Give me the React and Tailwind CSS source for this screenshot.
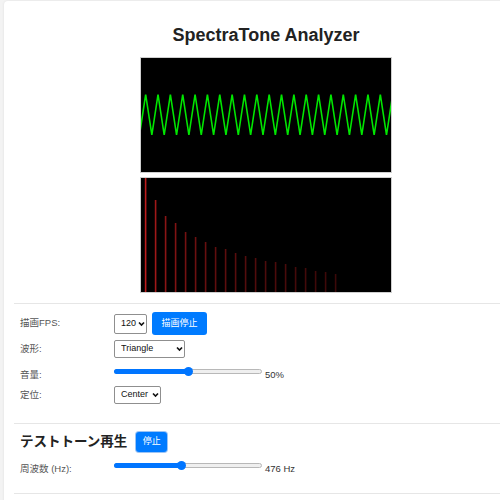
import { useState } from "react";

// triangle wave as drawn on the scope canvas
const wavePoints = (() => {
  const pts = [];
  const period = 12.35;
  for (let k = -1; k < 22; k++) {
    const t = -1.5 + k * period;
    pts.push(`${t.toFixed(2)},77`);
    pts.push(`${(t + period / 2).toFixed(2)},36.5`);
  }
  return pts.join(" ");
})();

const spectrum = [114, 92, 76, 69, 60, 55, 50, 45, 43, 39, 36, 34, 31, 30, 28, 25, 24, 21, 20, 18];

function Chevron() {
  return (
    <svg
      className="pointer-events-none absolute right-[2.5px] top-1/2 -translate-y-1/2"
      width="7"
      height="5"
      viewBox="0 0 7 5"
    >
      <path d="M1 1 L3.5 3.6 L6 1" fill="none" stroke="#111" strokeWidth="1.6" />
    </svg>
  );
}

function Select({ value, options, width, height = "h-[18px]" }) {
  return (
    <div className={`relative ${width} ${height}`}>
      <select
        defaultValue={value}
        className={`w-full ${height} appearance-none rounded-[2px] border border-[#8f8f8f] bg-white pl-[6px] text-[9px] text-[#111]`}
      >
        {options.map((o) => (
          <option key={o}>{o}</option>
        ))}
      </select>
      <Chevron />
    </div>
  );
}

function Slider({ ratio }) {
  return (
    <div className="relative h-[9px] w-[148px]">
      <div className="absolute left-0 right-0 top-[2px] h-[5px] rounded-full border border-[#b8b8b8] bg-[#efefef]" />
      <div
        className="absolute left-0 top-[2px] h-[5px] rounded-full bg-[#0075ff]"
        style={{ width: `${4 + ratio * 140}px` }}
      />
      <div
        className="absolute top-0 h-[9px] w-[9px] rounded-full bg-[#0075ff]"
        style={{ left: `${ratio * 139}px` }}
      />
    </div>
  );
}

export default function App() {
  const [playing] = useState(true);

  return (
    <div className="h-[500px] w-[500px] overflow-hidden bg-[#f3f3f3] font-['Liberation_Sans','Noto_Sans_CJK_JP',sans-serif]">
      <div className="ml-[4px] mt-[1px] w-[524px] rounded-[4px] bg-white px-[10px] pt-[24px] pb-[20px] shadow-[0_0_3px_rgba(0,0,0,0.08)]">
        <h1 className="text-center text-[18px] font-bold leading-[21px] text-[#222]">
          SpectraTone Analyzer
        </h1>

        <div className="mx-auto mt-[11px] h-[116px] w-[252px] border border-[#cfcfcf] bg-black">
          <svg width="250" height="114" viewBox="0 0 250 114">
            <polyline points={wavePoints} fill="none" stroke="#00e600" strokeWidth="1.6" />
          </svg>
        </div>

        <div className="mx-auto mt-[4px] h-[116px] w-[252px] border border-[#cfcfcf] bg-black">
          <svg width="250" height="114" viewBox="0 0 250 114">
            {spectrum.map((h, i) => {
              const r = Math.round(35 + 1.35 * h);
              return (
                <rect
                  key={i}
                  x={3.8 + i * 10}
                  y={114 - h}
                  width="1.6"
                  height={h}
                  fill={`rgb(${r},${Math.round(r * 0.15)},${Math.round(r * 0.15)})`}
                />
              );
            })}
          </svg>
        </div>

        {/* controls */}
        <div className="mt-[10px] border-t border-[#e6e6e6] pl-[6px] pt-[8px] pb-[19px] text-[9.5px] text-[#555]">
          <div className="flex h-[23px] items-center">
            <span className="w-[94px]">描画FPS:</span>
            <Select value="120" options={["30", "60", "120"]} width="w-[33px]" height="h-[20px]" />
            <button className="ml-[5px] h-[23px] w-[55px] rounded-[3px] bg-[#007bff] text-[9px] text-white">
              描画停止
            </button>
          </div>
          <div className="mt-[4px] flex h-[20px] items-center">
            <span className="w-[94px]">波形:</span>
            <Select
              value="Triangle"
              options={["Sine", "Square", "Sawtooth", "Triangle"]}
              width="w-[71px]"
            />
          </div>
          <div className="mt-[6px] flex h-[20px] items-center">
            <span className="w-[94px]">音量:</span>
            <div className="mb-[8px]">
              <Slider ratio={0.5} />
            </div>
            <span className="ml-[3px] text-[#333]">50%</span>
          </div>
          <div className="mt-[1px] flex h-[18px] items-center">
            <span className="w-[94px]">定位:</span>
            <Select value="Center" options={["Left", "Center", "Right"]} width="w-[47px]" />
          </div>
        </div>

        {/* test tone */}
        <div className="border-t border-[#e6e6e6] pl-[6px] pt-[8px] pb-[14px] text-[9.5px] text-[#555]">
          <div className="flex h-[20px] items-center">
            <h2 className="text-[13.5px] font-bold text-[#222]">テストトーン再生</h2>
            <button className="ml-[9px] h-[20px] w-[31px] rounded-[3px] bg-[#007bff] text-[9px] text-white ring-1 ring-[#9cc4f5]">
              {playing ? "停止" : "再生"}
            </button>
          </div>
          <div className="mt-[7px] flex h-[20px] items-center">
            <span className="w-[94px]">周波数 (Hz):</span>
            <div className="mb-[8px]">
              <Slider ratio={0.456} />
            </div>
            <span className="ml-[3px] text-[#333]">476 Hz</span>
          </div>
        </div>

        <div className="border-t border-[#e6e6e6] pl-[6px] pt-[8px] h-[40px]" />
      </div>
    </div>
  );
}
